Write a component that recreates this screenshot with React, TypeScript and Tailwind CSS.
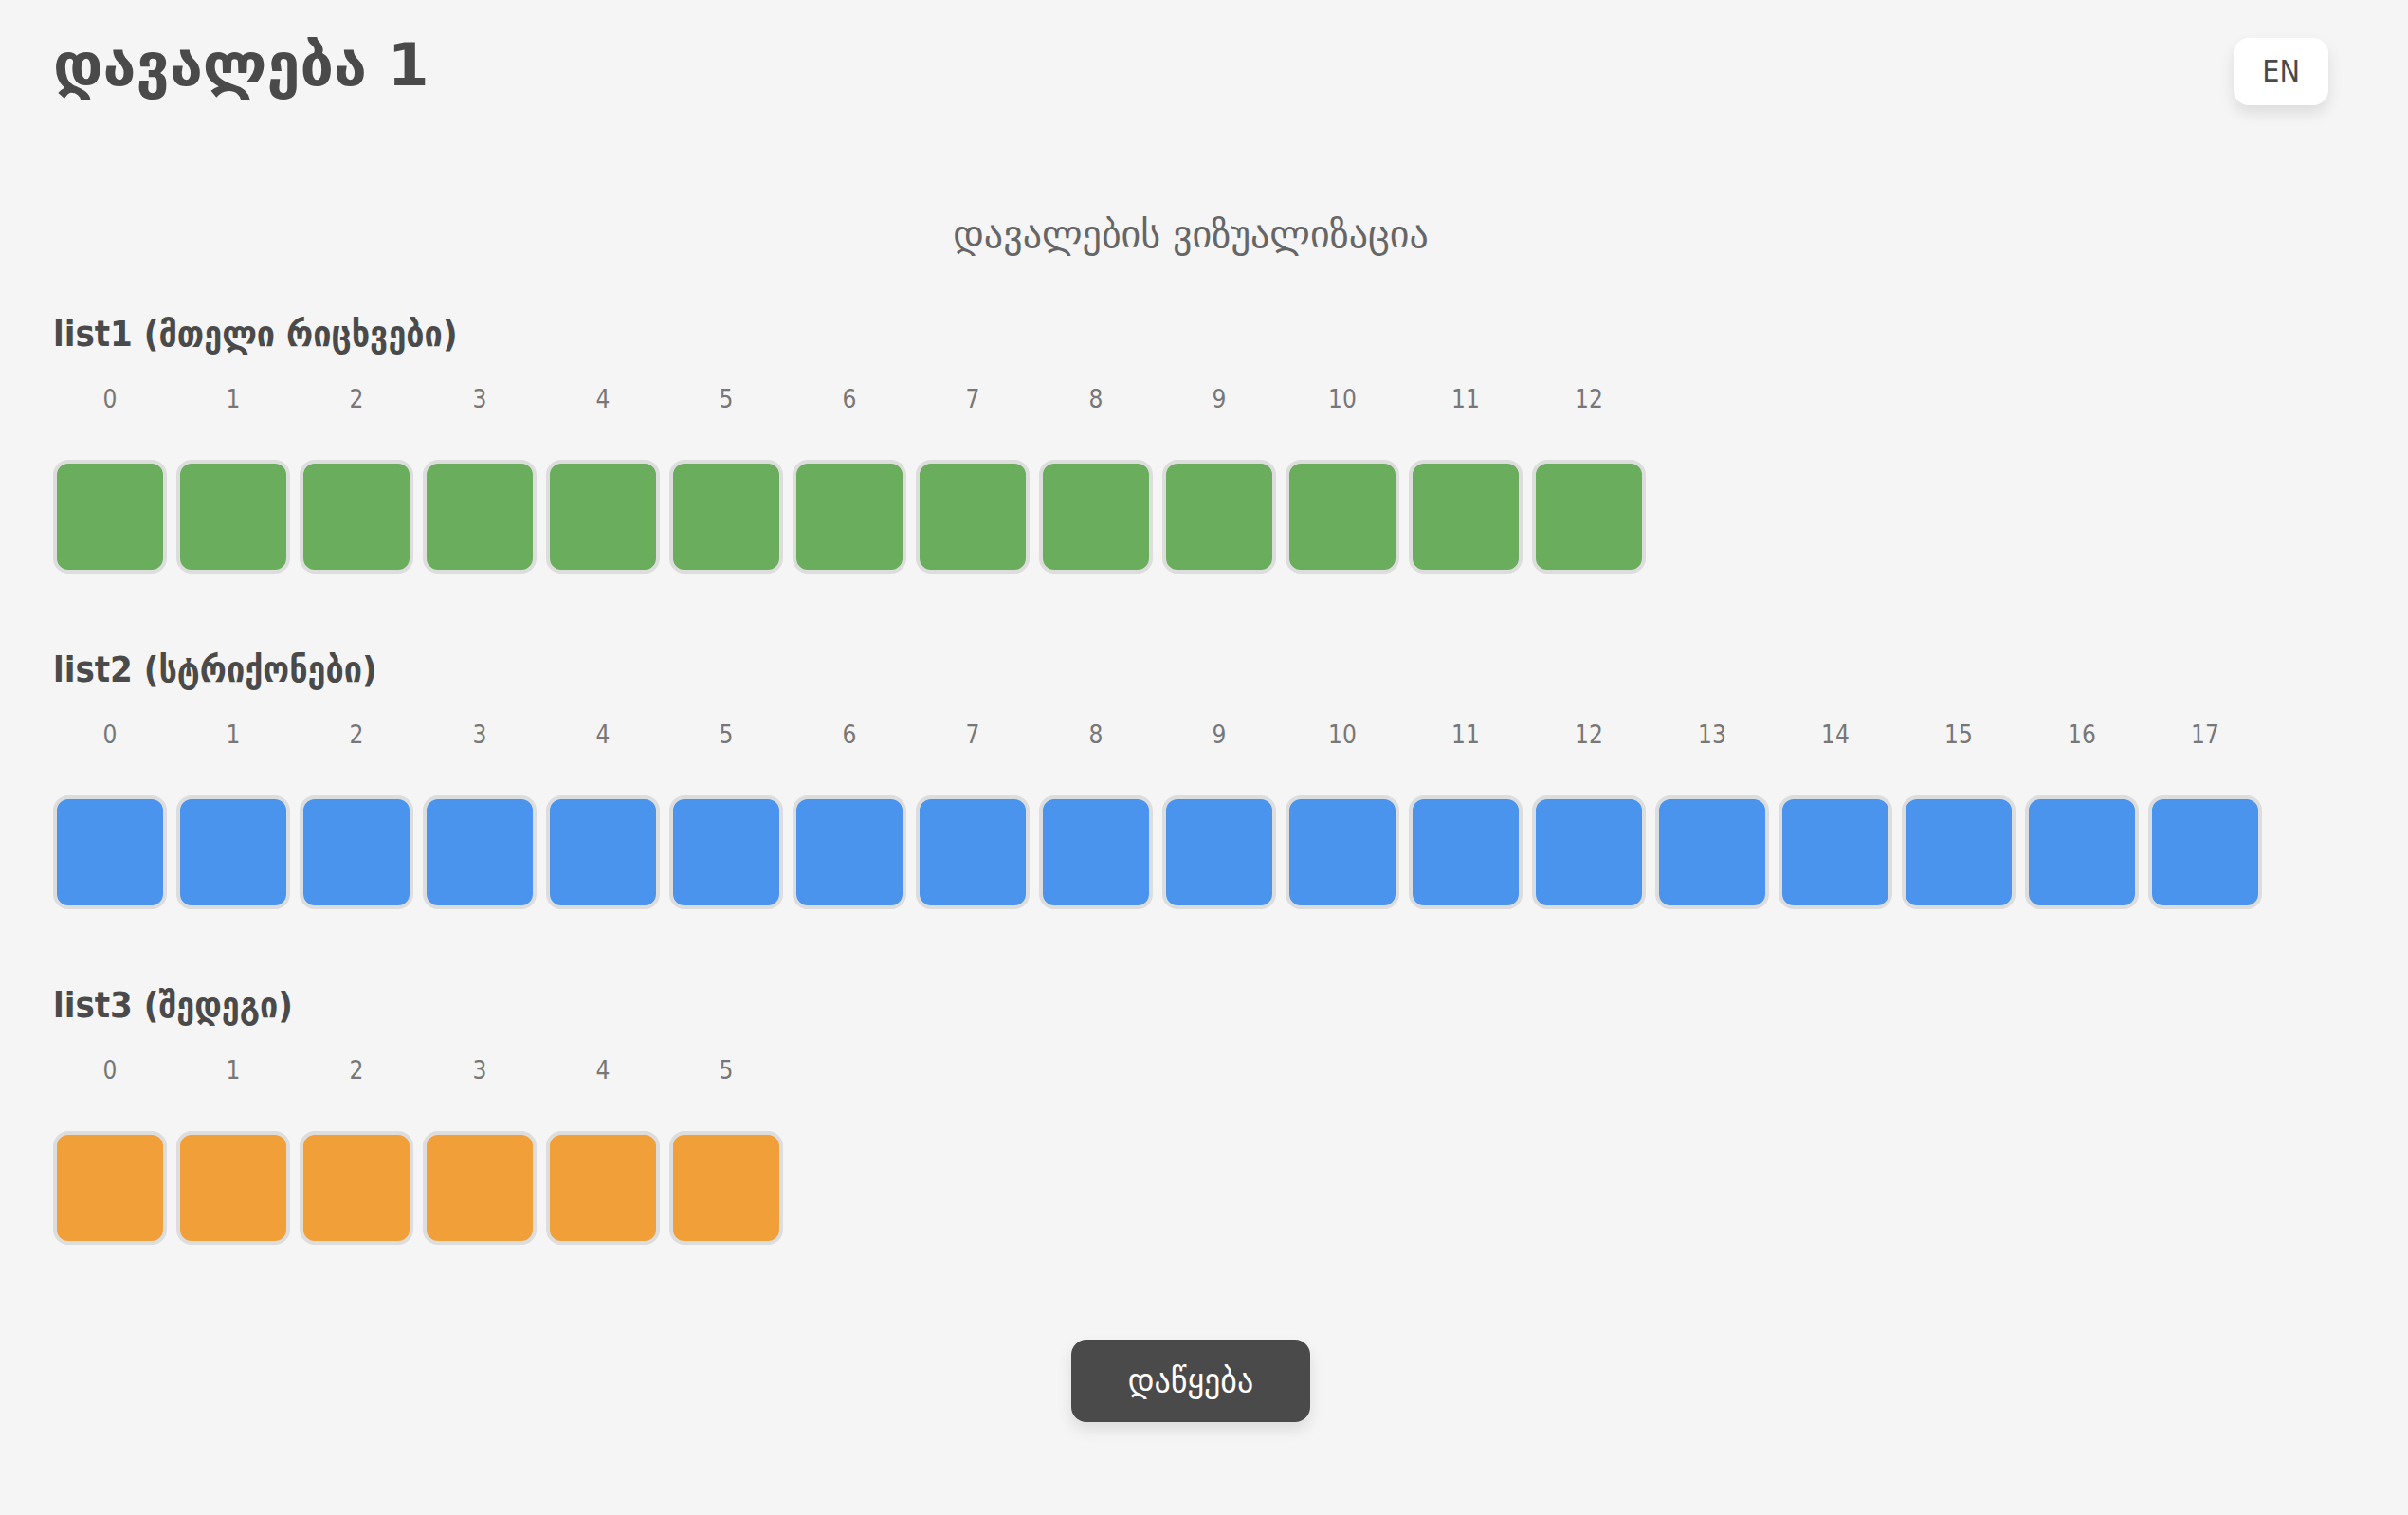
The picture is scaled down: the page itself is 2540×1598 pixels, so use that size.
const lists = [
  { title: 'list1 (მთელი რიცხვები)', count: 13, color: 'bg-[#69ad5d]' },
  { title: 'list2 (სტრიქონები)', count: 18, color: 'bg-[#4a94ed]' },
  { title: 'list3 (შედეგი)', count: 6, color: 'bg-[#f19f38]' },
];

export default function App() {
  return (
    <main className="min-h-screen bg-[#f5f5f5] pt-8 pr-21 pb-24 pl-14 font-['DejaVu_Sans',sans-serif] text-[#4a4a4a]">
      <header className="flex items-start justify-between">
        <h1 className="text-[63px] leading-[74px] font-bold">დავალება 1</h1>
        <button
          type="button"
          className="mt-2 rounded-2xl bg-white px-[30px] py-4 font-['DejaVu_Sans_Condensed','DejaVu_Sans',sans-serif] text-[32px] leading-[39px] shadow-[0_8px_16px_rgba(0,0,0,0.1)]"
        >
          EN
        </button>
      </header>
      <h2 className="mt-[116px] text-center text-[40px] leading-10 text-[#666666]">დავალების ვიზუალიზაცია</h2>
      <div className="mt-16 flex flex-col gap-20">
        {lists.map((list) => (
          <section key={list.title}>
            <h3 className="font-['DejaVu_Sans_Condensed','DejaVu_Sans',sans-serif] text-[38px] leading-[42px] font-bold">
              {list.title}
            </h3>
            <ol className="mt-8 flex gap-2.5">
              {Array.from({ length: list.count }, (_, i) => (
                <li key={i} className="flex w-[120px] shrink-0 flex-col items-center gap-12">
                  <span className="font-['DejaVu_Sans_Condensed','DejaVu_Sans',sans-serif] text-[26px] leading-8 text-[#777777]">
                    {i}
                  </span>
                  <div className={`size-[120px] rounded-2xl border-4 border-[#dddddd] ${list.color}`} />
                </li>
              ))}
            </ol>
          </section>
        ))}
      </div>
      <div className="mt-25 flex justify-center">
        <button
          type="button"
          className="rounded-2xl bg-[#4a4a4a] px-15 py-6 text-[34px] leading-[39px] text-white shadow-[0_8px_16px_rgba(0,0,0,0.1)]"
        >
          დაწყება
        </button>
      </div>
    </main>
  );
}
